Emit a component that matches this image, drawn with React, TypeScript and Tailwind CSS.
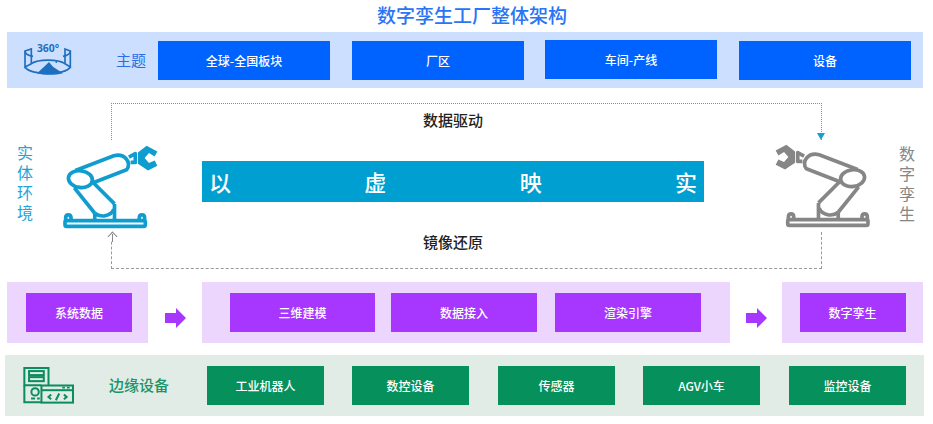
const topItems = [
  { label: '全球-全国板块', className: 'ml-[151px] mt-[9px]' },
  { label: '厂区', className: 'ml-[22px] mt-[9px]' },
  { label: '车间-产线', className: 'ml-[21px] mt-[8px]' },
  { label: '设备', className: 'ml-[22px] mt-[9px]' },
];

const edgeItems = ['工业机器人', '数控设备', '传感器', 'AGV小车', '监控设备'];

function PanoramaIcon() {
  return (
    <svg viewBox="70 125 150 102" className="absolute left-[16px] top-[10px] h-[34px] w-[50px]" aria-hidden="true">
      <g fill="none" stroke="#1f6fc0" strokeWidth="5">
        <path d="M76 152 L95 146 L95 190 L76 200 Z" />
        <path d="M196 146 L212 152 L212 200 L196 190 Z" />
        <path d="M76 152 C76 160 88 166 100 168" />
        <path d="M212 152 C212 160 200 166 190 168" />
        <path d="M76 200 C90 226 198 226 212 200" />
        <path d="M95 190 C115 176 175 176 196 190" />
      </g>
      <path d="M112 219 L135 198 L148 185 L160 199 L170 206 L190 219 C165 225 135 225 112 219 Z" fill="#1f6fc0" />
      <circle cx="170" cy="185" r="3" fill="#1f6fc0" />
      <text x="145" y="155" textAnchor="middle" fontSize="31" fontWeight="700" fill="#1f6fc0" fontFamily="'Noto Sans', sans-serif">360°</text>
    </svg>
  );
}

function RobotArm({ color, flip }: { color: string; flip?: boolean }) {
  return (
    <svg viewBox="185 40 290 260" className={flip ? 'h-[87px] w-[97px] -scale-x-100' : 'h-[87px] w-[97px]'} aria-hidden="true">
      <g fill="none" stroke={color} strokeWidth="11" strokeLinejoin="round">
        <rect x="194" y="272" width="240" height="17" rx="5" />
        <path d="M196 276 V264 C196 252 212 252 212 264 V276" />
        <path d="M416 276 V264 C416 252 432 252 432 264 V276" />
        <path d="M283 250 V272 M342 222 V272" />
        <path d="M283 250 C300 264 330 260 340 238" />
        <ellipse cx="240" cy="148" rx="36" ry="25" transform="rotate(8 240 148)" />
        <path d="M222 174 L283 250" />
        <path d="M342 222 L278 158" />
        <path d="M225 122 L340 78 C372 70 395 98 378 120 L280 158" />
        <path d="M385 82 L404 72 L404 98 L390 98" />
      </g>
      <path d="M438 48 L470 65 L462 80 L445 70 L432 85 L445 100 L462 92 L470 108 L442 122 L412 102 L412 68 Z" fill={color} />
    </svg>
  );
}

function ArrowRight() {
  return (
    <svg viewBox="0 0 21 20" className="h-[20px] w-[21px]" aria-hidden="true">
      <path d="M0 5 H11 V0 L21 10 L11 20 V15 H0 Z" fill="#a736ff" />
    </svg>
  );
}

function EdgeIcon() {
  return (
    <svg viewBox="68 276 152 110" className="h-[37px] w-[51px]" aria-hidden="true">
      <g fill="none" stroke="#0b8d5e" strokeWidth="6">
        <path d="M122 330 H72 V279 H144 V330" />
        <path d="M72 330 V381 H122" />
        <rect x="86" y="288" width="44" height="12" />
        <rect x="86" y="306" width="44" height="12" />
        <circle cx="104" cy="350" r="11" />
        <path d="M92 370 H104 M110 370 H118" />
        <rect x="123" y="331" width="94" height="51" />
        <path d="M123 345 H217" />
        <path d="M152 358 L144 365 L152 372 M190 358 L198 365 L190 372 M176 355 L166 375" />
      </g>
      <path d="M185 335 H193 V340 H185 Z M199 335 H207 V340 H199 Z" fill="#0b8d5e" />
    </svg>
  );
}

export default function App() {
  return (
    <div className="h-[424px] w-[933px] overflow-hidden bg-white font-['Noto_Sans_CJK_SC','Noto_Sans',sans-serif]">
      <h1 className="h-[32px] pt-[1px] pl-[377px] text-[19px] font-medium leading-[28px] text-[#2a74f5]">数字孪生工厂整体架构</h1>

      {/* Theme band */}
      <div className="relative ml-[7px] flex h-[56px] w-[916px] bg-[#cddffe]">
        <PanoramaIcon />
        {topItems.map((item) => (
          <div key={item.label} className={`flex h-[39px] w-[172px] items-center justify-center bg-[#0062ff] text-[12px] font-medium text-white ${item.className}`}>
            {item.label}
          </div>
        ))}
        <span className="absolute left-[109px] top-[18px] text-[15px] leading-[20px] text-[#2a6fe8]">主题</span>
      </div>

      {/* Middle section */}
      <div className="relative flex h-[194px]">
        <div className="absolute left-[111px] top-[15px] h-[37px] w-[711px] border-x border-t border-b-0 border-dotted border-[#22b0dc]" />
        <div className="absolute left-[817px] top-[45px] h-0 w-0 border-x-[4px] border-t-[7px] border-x-transparent border-t-[#13a0d0]" />
        <div className="absolute left-[111px] top-[144px] h-[37px] w-[711px] border-x border-b border-t-0 border-dashed border-[#999]" />
        <div className="absolute left-[108.5px] top-[145px] h-[7px] w-[7px] rotate-45 border-l border-t border-[#888] bg-white" />
        <div className="absolute left-[112px] top-[146px] h-[8px] w-px bg-[#888]" />

        <div className="ml-[16px] mt-[57px] h-[80px] w-[17px] text-[16px] leading-[17px] tracking-[4px] text-[#26a3d6] [writing-mode:vertical-rl]">实体环境</div>
        <div className="ml-[29px] mt-[55px]">
          <RobotArm color="#0f9ccf" />
        </div>
        <div className="ml-[43px] w-[502px] text-center">
          <div className="mt-[22px] h-[20px] text-[15px] font-medium leading-[20px] text-[#222]">数据驱动</div>
          <div className="mt-[31px] flex h-[41px] items-center justify-between bg-[#009fd1] px-[7px] text-[22px] font-medium text-white">
            <span>以</span>
            <span>虚</span>
            <span>映</span>
            <span>实</span>
          </div>
          <div className="mt-[30px] h-[20px] text-[15px] font-medium leading-[20px] text-[#222]">镜像还原</div>
        </div>
        <div className="ml-[70px] mt-[54px]">
          <RobotArm color="#868686" flip />
        </div>
        <div className="ml-[27px] mt-[58px] h-[80px] w-[17px] text-[16px] leading-[17px] tracking-[4px] text-[#868686] [writing-mode:vertical-rl]">数字孪生</div>
      </div>

      {/* Data flow row */}
      <div className="flex h-[61px] items-center text-[12px] font-medium text-white">
        <div className="ml-[7px] flex h-full w-[141px] items-center bg-[#ecd6fe] pl-[19px]">
          <div className="flex h-[39px] w-[106px] items-center justify-center bg-[#a736ff]">系统数据</div>
        </div>
        <div className="ml-[17px] mt-[10px]">
          <ArrowRight />
        </div>
        <div className="ml-[16px] flex h-full w-[528px] items-center bg-[#ecd6fe] pl-[28px]">
          <div className="flex h-[39px] w-[145px] items-center justify-center bg-[#a736ff]">三维建模</div>
          <div className="ml-[16px] flex h-[39px] w-[146px] items-center justify-center bg-[#a736ff]">数据接入</div>
          <div className="ml-[18px] flex h-[39px] w-[146px] items-center justify-center bg-[#a736ff]">渲染引擎</div>
        </div>
        <div className="ml-[16px] mt-[10px]">
          <ArrowRight />
        </div>
        <div className="ml-[15px] flex h-full w-[141px] items-center justify-center bg-[#ecd6fe]">
          <div className="flex h-[39px] w-[106px] items-center justify-center bg-[#a736ff]">数字孪生</div>
        </div>
      </div>

      {/* Edge devices row */}
      <div className="ml-[5px] mt-[12px] flex h-[61px] w-[919px] items-center bg-[#e2ece7] pl-[18px]">
        <EdgeIcon />
        <span className="ml-[35px] w-[98px] text-[15px] font-medium text-[#1a9468]">边缘设备</span>
        {edgeItems.map((item, i) => (
          <div
            key={item}
            className={`flex h-[39px] w-[117px] items-center justify-center bg-[#05905c] text-[12px] font-medium text-white ${i === 0 ? '' : i === 2 || i === 4 ? 'ml-[29px]' : 'ml-[28px]'}`}
          >
            {item}
          </div>
        ))}
      </div>
    </div>
  );
}
